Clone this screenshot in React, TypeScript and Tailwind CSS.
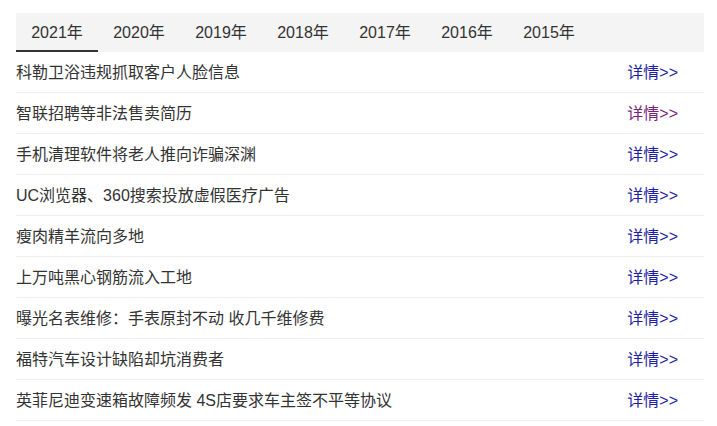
import React, { useState } from "react";

const years = ["2021年", "2020年", "2019年", "2018年", "2017年", "2016年", "2015年"];

const news = [
  { title: "科勒卫浴违规抓取客户人脸信息", visited: false },
  { title: "智联招聘等非法售卖简历", visited: true },
  { title: "手机清理软件将老人推向诈骗深渊", visited: false },
  { title: "UC浏览器、360搜索投放虚假医疗广告", visited: false },
  { title: "瘦肉精羊流向多地", visited: false },
  { title: "上万吨黑心钢筋流入工地", visited: false },
  { title: "曝光名表维修：手表原封不动 收几千维修费", visited: false },
  { title: "福特汽车设计缺陷却坑消费者", visited: false },
  { title: "英菲尼迪变速箱故障频发 4S店要求车主签不平等协议", visited: false },
];

const App: React.FC = () => {
  const [active, setActive] = useState(0);

  return (
    <div
      className="bg-white w-[717px] h-[426px] pt-[13px] pl-4"
      style={{ fontFamily: '"Liberation Sans", "Noto Sans CJK SC", sans-serif' }}
    >
      <div className="w-[688px]">
        {/* Year tabs */}
        <div className="flex h-[39px] bg-[#f4f4f4]">
          {years.map((y, i) => (
            <button
              key={y}
              onClick={() => setActive(i)}
              className={
                "w-[82px] h-[39px] flex items-center justify-center pt-[3px] text-[16px] text-[#333] border-b-2 " +
                (i === active ? "border-[#333]" : "border-transparent")
              }
            >
              {y}
            </button>
          ))}
        </div>

        {/* News list */}
        <ul>
          {news.map((n) => (
            <li
              key={n.title}
              className="flex items-center justify-between h-[41px] pt-[2px] border-b border-[#eeeeee] text-[16px]"
            >
              <span className="text-[#333]">{n.title}</span>
              <a
                href="#"
                className={
                  "mr-[26px] " + (n.visited ? "text-[#7b1f7b]" : "text-[#1e1ea6]")
                }
              >
                详情&gt;&gt;
              </a>
            </li>
          ))}
        </ul>
      </div>
    </div>
  );
};

export default App;
